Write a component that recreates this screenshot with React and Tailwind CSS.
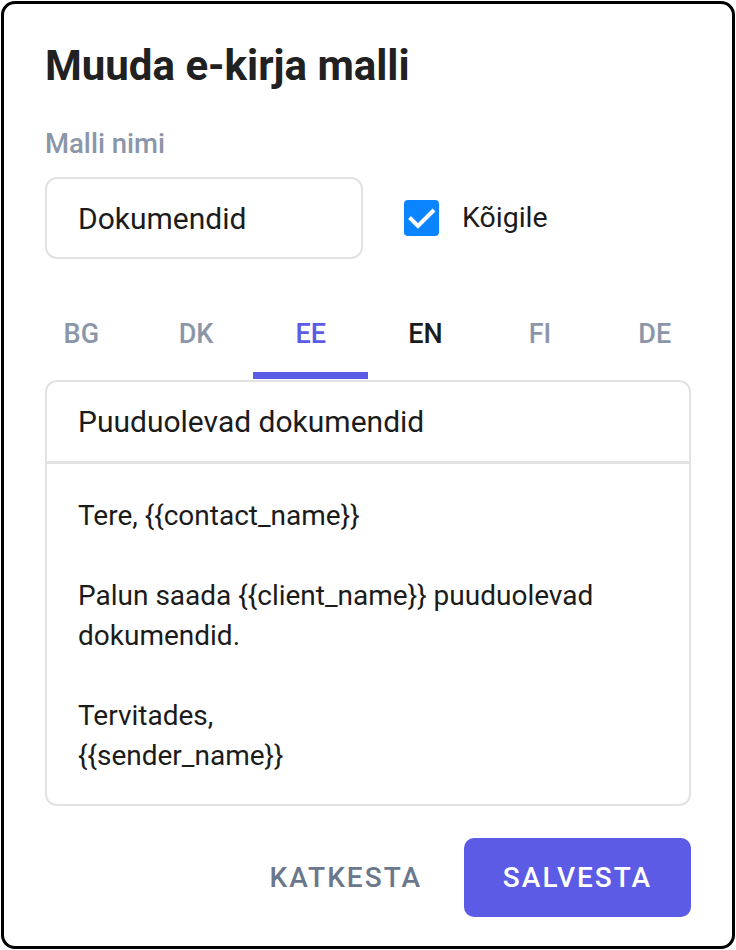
import React, { useState } from 'react';

const LANGS = ['BG', 'DK', 'EE', 'EN', 'FI', 'DE'];

const BODY = `Tere, {{contact_name}}

Palun saada {{client_name}} puuduolevad dokumendid.

Tervitades,
{{sender_name}}`;

const CheckIcon = () => (
  <svg viewBox="0 0 35 36" className="w-[35px] h-[36px]" fill="none">
    <path d="M5.5 17.5l8.5 8.5L30 10" stroke="white" strokeWidth="4" />
  </svg>
);

export default function App() {
  const [lang, setLang] = useState('EE');
  const [forAll, setForAll] = useState(true);

  return (
    <div className="w-[736px] h-[950px] bg-white p-px font-['Roboto',sans-serif]">
      <div className="h-full border-[3px] border-black rounded-[14px] px-[41px] pt-[38px] pb-[29px] flex flex-col">
        <h1 className="text-[42px] leading-[48px] font-bold text-[#212121]">
          Muuda e-kirja malli
        </h1>

        <label className="mt-[38px] text-[27.5px] leading-[32px] font-medium text-[#8c96a9]">
          Malli nimi
        </label>

        <div className="mt-[17px] flex items-center">
          <div className="w-[318px] h-[82px] rounded-[12px] border-2 border-[#e2e2e2] px-[31px] flex items-center text-[30px] text-[#1b1b1b]">
            Dokumendid
          </div>
          <button
            type="button"
            onClick={() => setForAll(!forAll)}
            className="ml-[41px] flex items-center gap-[23px]"
          >
            <span className="w-[35px] h-[36px] rounded-[4px] bg-[#0a84ff] flex items-center justify-center">
              {forAll && <CheckIcon />}
            </span>
            <span className="text-[28.5px] text-[#1b1b1b]">Kõigile</span>
          </button>
        </div>

        <div className="mt-[46px] -mx-[21px] flex">
          {LANGS.map((l) => (
            <button
              key={l}
              type="button"
              onClick={() => setLang(l)}
              className={`flex-1 h-[74px] flex flex-col items-center justify-between pt-[14px] text-[27px] font-medium ${
                lang === l ? 'text-[#5b5be6]' : l === 'EN' ? 'text-[#1b1b1b]' : 'text-[#8c96a9]'
              }`}
            >
              <span className="leading-[30px]">{l}</span>
              <span className={`w-full h-[7px] ${lang === l ? 'bg-[#5b5be6]' : 'bg-transparent'}`} />
            </button>
          ))}
        </div>

        <div className="mt-px rounded-[12px] border-2 border-[#e2e2e2] overflow-hidden">
          <div className="h-[82px] px-[31px] flex items-center text-[30px] text-[#1b1b1b] border-b-[3px] border-[#e2e2e2]">
            Puuduolevad dokumendid
          </div>
          <div className="px-[31px] pt-[32px] pb-[28px] text-[28px] leading-[40px] text-[#1b1b1b] whitespace-pre-line">
            {BODY}
          </div>
        </div>

        <div className="mt-auto flex justify-end items-center">
          <button type="button" className="h-[79px] px-[42px] text-[28px] font-medium tracking-[2px] text-[#6b778c]">
            KATKESTA
          </button>
          <button type="button" className="h-[79px] w-[227px] rounded-[10px] bg-[#5b5be6] text-[28px] font-medium tracking-[2px] text-white">
            SALVESTA
          </button>
        </div>
      </div>
    </div>
  );
}
